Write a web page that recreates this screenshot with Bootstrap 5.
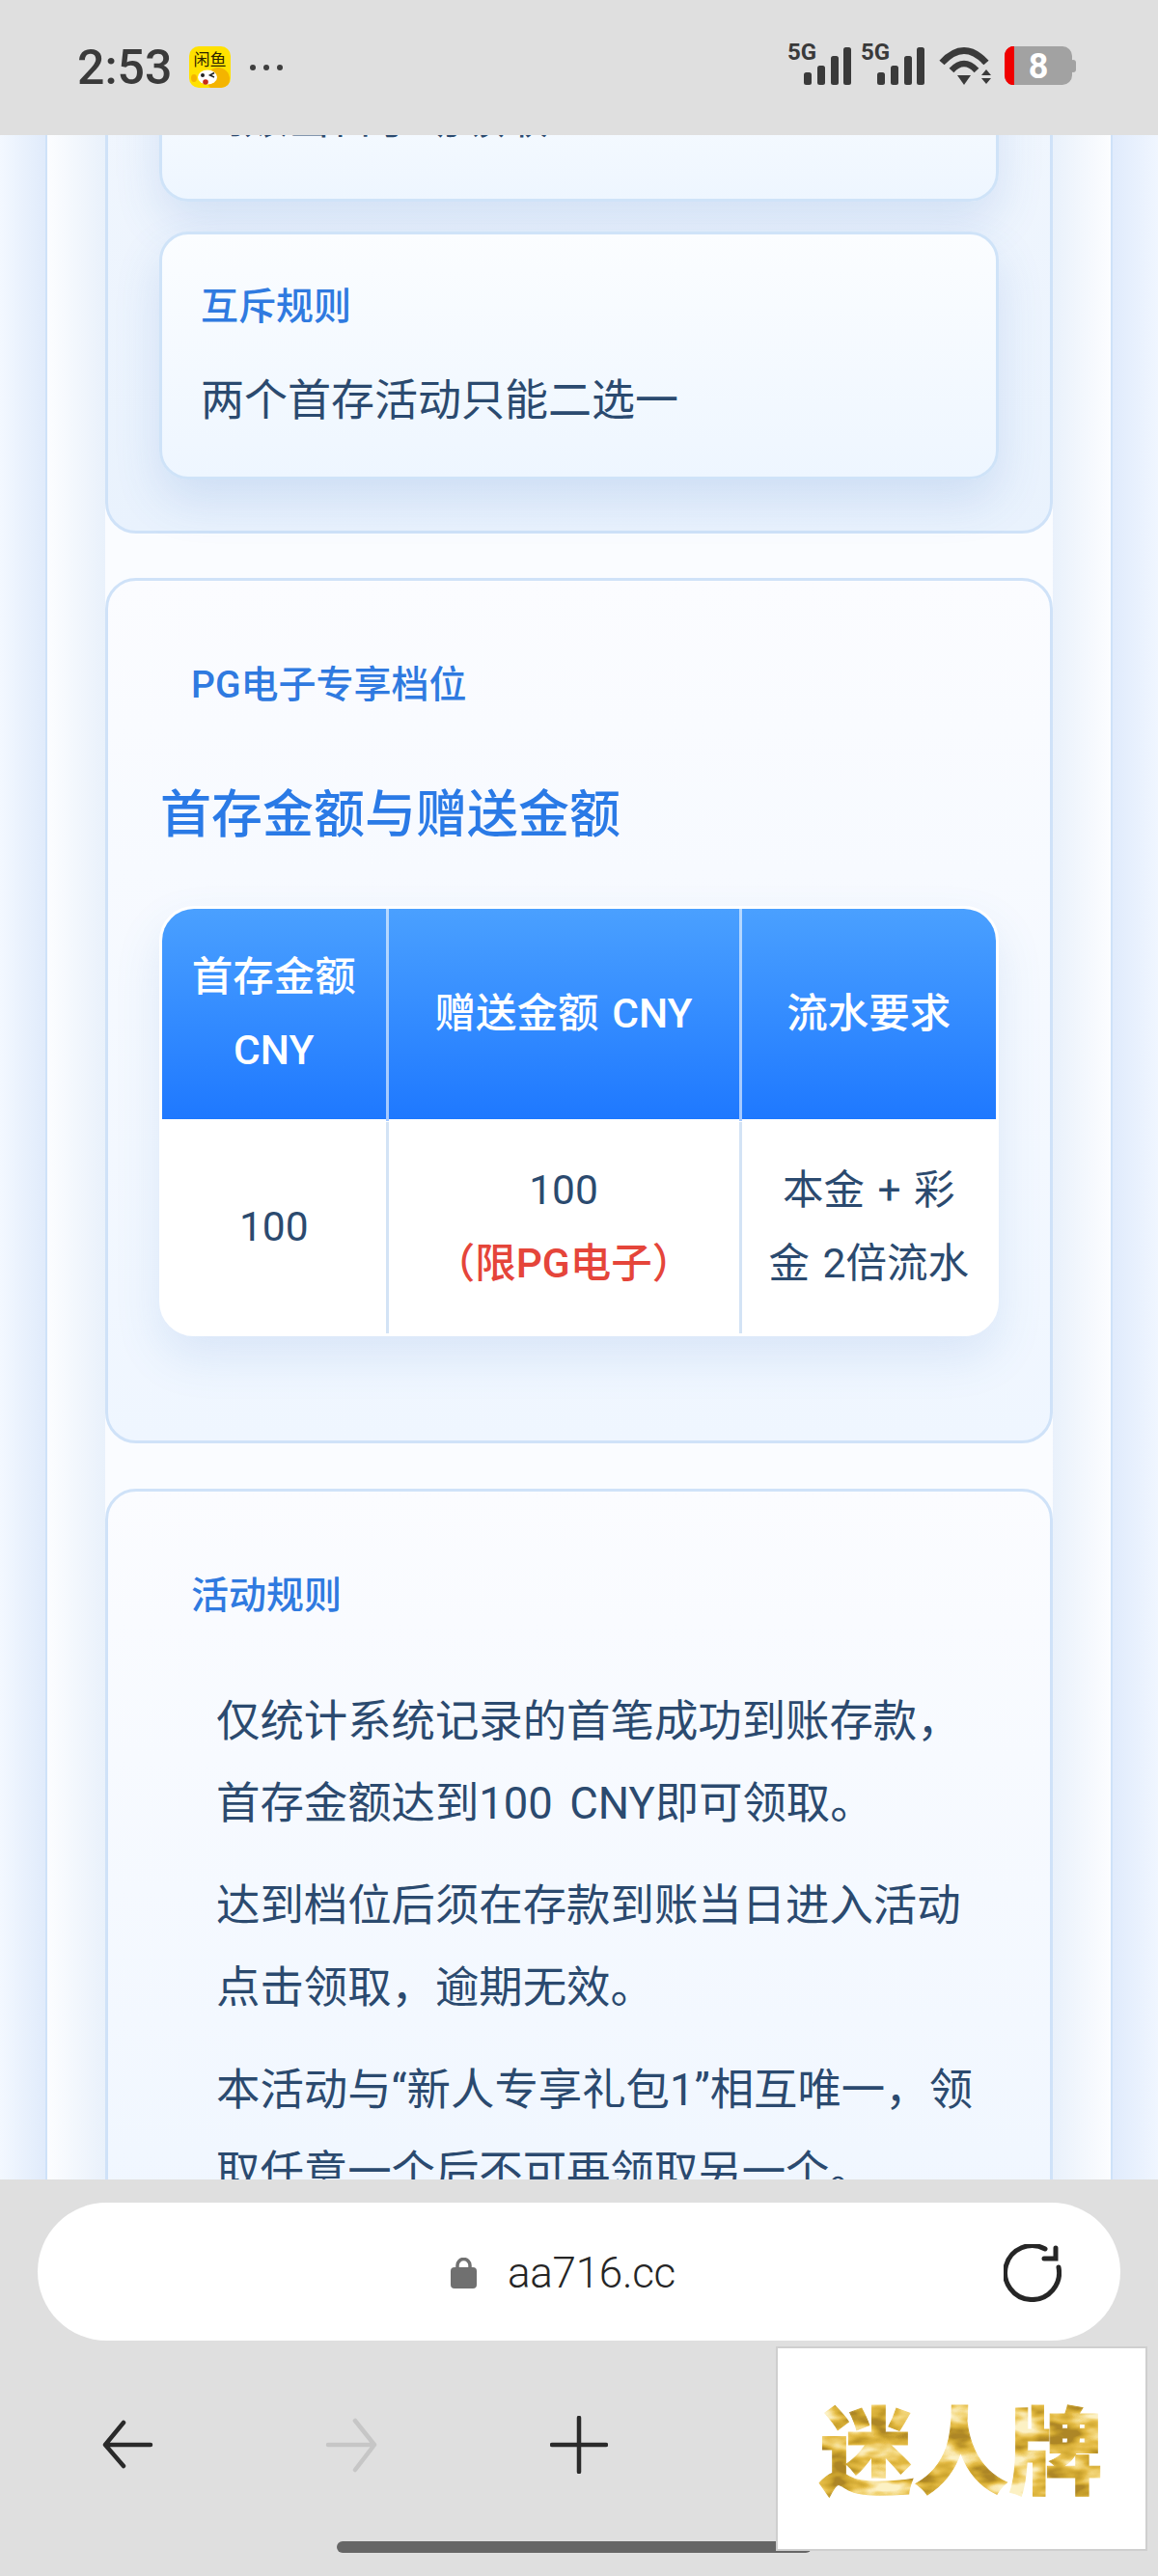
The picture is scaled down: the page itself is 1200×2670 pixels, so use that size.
<!DOCTYPE html>
<html lang="zh-CN">
<head>
  <meta charset="UTF-8">
  <title>首存活动</title>
  <link href="https://cdn.jsdelivr.net/npm/bootstrap@5.3.3/dist/css/bootstrap.min.css" rel="stylesheet">
  <style>
    body {
      width: 1200px;
      height: 2670px;
      overflow: hidden;
      font-family: Roboto, "Noto Sans CJK SC", sans-serif;
      color: #2b4a6f;
      background: #dfdfdf;
    }

    /* phone status bar */
    .status-bar { height: 140px; background: #dfdfdf; padding: 40px 82px 0 80px; color: #3a3a3a; }
    .clock { font-size: 50px; font-weight: 500; line-height: 60px; margin-right: 18px; }
    .app-icon { margin-top: 8px; margin-right: 20px; }
    .more-dots { margin-top: 26px; }

    /* page area, scrolled */
    .page-view {
      height: 2119px;
      overflow: hidden;
      background: linear-gradient(90deg, #f3f8ff 0, #e0ebfb 47px, #e0ebfc calc(100% - 47px), #f0f6ff 100%);
    }
    .page-shell {
      width: 1106px;
      margin: -132px auto 0;
      padding: 0 60px;
      border-left: 2px solid #cfe2f9;
      border-right: 2px solid #cfe2f9;
      background: linear-gradient(90deg, #fcfdff 0, #e9f1fb 60px, #fafcff 60px, #fafcff calc(100% - 60px), #e9f1fb calc(100% - 60px), #fcfdff 100%);
    }
    .promo-panel {
      border: 3px solid #cfe2f8;
      border-radius: 32px;
      background: linear-gradient(180deg, #fbfcff, #eff6ff);
      padding: 75px 55px 53px;
      margin-bottom: 47px;
    }
    .promo-panel.first-panel { padding-top: 25px; padding-bottom: 53px; margin-bottom: 46px; background: linear-gradient(180deg, #f2f7fe, #e9f2fd); }
    .promo-panel.table-panel { padding-bottom: 108px; }

    .rule-card {
      border: 3px solid #cfe3f8;
      border-radius: 30px;
      background: linear-gradient(180deg, #fbfdff, #eef6ff);
      box-shadow: 0 22px 48px rgba(60, 120, 200, .16);
      margin: 0 -2px 31px;
      padding: 42px 40px 40px;
    }
    .rule-card:last-child { margin-bottom: 0; padding-bottom: 36px; }
    .rule-card .rule-head { font-size: 39px; line-height: 66px; margin: 0 0 22px; color: #2f7ae0; font-weight: 500; }
    .rule-card p { font-size: 45px; line-height: 85px; margin: 0; white-space: nowrap; }

    .panel-label { font-size: 39px; line-height: 66px; margin: 0 0 62px 31px; color: #2f7ae0; font-weight: 500; }
    .panel-title { font-size: 53px; line-height: 80px; margin: 0 0 54px -1px; color: #2a7ae6; font-weight: 500; }
    .rules-label { margin-bottom: 55px; }

    .rate-box {
      margin: 0 -2px;
      border: 3px solid #fff;
      border-radius: 36px;
      overflow: hidden;
      background: #fff;
      box-shadow: 0 22px 48px rgba(60, 120, 200, .13);
    }
    .rate-table { table-layout: fixed; margin: 0; --bs-table-bg: transparent; color: #2b4a6f; }
    .rate-table thead { background: linear-gradient(180deg, #4aa0ff, #1e78ff); }
    .rate-table th, .rate-table td {
      font-size: 42.5px;
      line-height: 76px;
      text-align: center;
      vertical-align: middle;
      border-bottom: 0;
      word-spacing: 3px;
    }
    .rate-table th { color: #fff; font-weight: 500; padding: 33px 24px; border-left: 3px solid rgba(255, 255, 255, .6); box-shadow: none; }
    .rate-table td { padding: 33px 24px 34px; border-left: 3px solid #d3e3f5; border-top: 3px solid #fff; color: #2b4a6f; }
    .rate-table th:first-child, .rate-table td:first-child { border-left: 0; }
    .col-amount { width: 233px; }
    .col-bonus { width: 366px; }
    .pg-only { display: block; color: #e5453a; font-weight: 500; }

    .rule-text { font-size: 45.4px; line-height: 85px; margin: 0 0 21px 57px; width: 785px; word-spacing: 6px; }

    /* browser chrome */
    .browser-bar { position: relative; height: 411px; padding-top: 24px; background: #dfdfdf; }
    .url-pill {
      margin: 0 39px;
      height: 143px;
      padding: 2px 61px 0 428px;
      border-radius: 72px;
      background: #fff;
    }
    .url-lock { margin-right: 32px; }
    .url-text { font-size: 44px; font-weight: 300; color: #262626; letter-spacing: -.3px; }
    .tool-row { padding: 78px 0 0 101px; gap: 174.5px; }
    .home-pill { position: absolute; left: 349px; top: 375px; width: 492px; height: 12px; border-radius: 6px; background: #666; }
    .gold-box {
      position: absolute;
      left: 804px;
      top: 173px;
      width: 385px;
      height: 212px;
      border: 2px solid #cfcfcf;
      background: #fff;
    }
    .gold-word {
      font-family: "Noto Sans CJK SC", sans-serif;
      font-size: 98px;
      font-weight: 900;
    }
  </style>
</head>
<body>

<!-- status bar -->
<div class="status-bar d-flex align-items-start">
  <div class="clock">2:53</div>
  <svg class="app-icon" width="43" height="43" viewBox="0 0 43 43">
    <defs><clipPath id="iconClip"><rect width="43" height="43" rx="10"/></clipPath></defs>
    <g clip-path="url(#iconClip)">
      <rect width="43" height="43" fill="#ffe100"/>
      <circle cx="30" cy="34" r="12" fill="#f4b400"/>
      <ellipse cx="5" cy="33" rx="3" ry="4" fill="#f4b400"/>
      <ellipse cx="19" cy="32" rx="10" ry="7.500" fill="#fff"/>
      <circle cx="14" cy="30" r="2" fill="#222"/>
      <path d="M26 27.500 L21.500 30 L26 32" fill="none" stroke="#222" stroke-width="1.500"/>
      <circle cx="17" cy="37" r="2.800" fill="#c62a1a"/>
    </g>
    <text x="21.500" y="20" text-anchor="middle" font-size="17" font-family="Noto Sans CJK SC, sans-serif" fill="#2a2200">闲鱼</text>
  </svg>
  <svg class="more-dots" width="34" height="8" viewBox="0 0 34 8" fill="#3f3f3f">
    <circle cx="3" cy="4" r="3"/><circle cx="17" cy="4" r="3"/><circle cx="31" cy="4" r="3"/>
  </svg>
  <svg class="ms-auto" width="302" height="52" viewBox="0 0 302 52" fill="#3a3a3a">
    <text x="0" y="22" font-size="24" font-weight="700" font-family="Roboto, sans-serif">5G</text>
    <rect x="17" y="35" width="8" height="13" rx="2.500"/>
    <rect x="31" y="28" width="8" height="20" rx="2.500"/>
    <rect x="45" y="18" width="8" height="30" rx="2.500"/>
    <rect x="58" y="9" width="8" height="39" rx="2.500"/>
    <text x="76" y="22" font-size="24" font-weight="700" font-family="Roboto, sans-serif">5G</text>
    <rect x="93" y="35" width="8" height="13" rx="2.500"/>
    <rect x="107" y="28" width="8" height="20" rx="2.500"/>
    <rect x="121" y="18" width="8" height="30" rx="2.500"/>
    <rect x="134" y="9" width="8" height="39" rx="2.500"/>
    <path d="M160 25 Q183 0 206 25" fill="none" stroke="#3a3a3a" stroke-width="7"/>
    <path d="M170 33 Q183 19 196 33" fill="none" stroke="#3a3a3a" stroke-width="6.500"/>
    <path d="M176 38 H190 L183 48 Z"/>
    <path d="M206 32 L211 38 H201 Z M201 41 H211 L206 47 Z"/>
    <rect x="225" y="8" width="70" height="40" rx="10" fill="#a2a2a2"/>
    <path d="M232 8 H235 V48 H232 A10 10 0 0 1 225 38 V18 A10 10 0 0 1 232 8 Z" fill="#f00000"/>
    <rect x="293" y="22" width="6" height="13" rx="3" fill="#a2a2a2"/>
    <text x="260" y="41" text-anchor="middle" font-size="36" font-weight="700" font-family="Roboto, sans-serif" fill="#fff">8</text>
  </svg>
</div>

<!-- page -->
<div class="page-view">
  <div class="page-shell">

    <section class="promo-panel first-panel">
      <div class="rule-card">
        <p>到账当日手动领取</p>
      </div>
      <div class="rule-card">
        <div class="rule-head">互斥规则</div>
        <p>两个首存活动只能二选一</p>
      </div>
    </section>

    <section class="promo-panel table-panel">
      <div class="panel-label">PG电子专享档位</div>
      <h2 class="panel-title">首存金额与赠送金额</h2>
      <div class="rate-box">
        <table class="table rate-table">
          <thead>
            <tr>
              <th class="col-amount">首存金额 CNY</th>
              <th class="col-bonus">赠送金额 CNY</th>
              <th>流水要求</th>
            </tr>
          </thead>
          <tbody>
            <tr>
              <td>100</td>
              <td>100<span class="pg-only">（限PG电子）</span></td>
              <td>本金 + 彩金 2倍流水</td>
            </tr>
          </tbody>
        </table>
      </div>
    </section>

    <section class="promo-panel">
      <div class="panel-label rules-label">活动规则</div>
      <p class="rule-text">仅统计系统记录的首笔成功到账存款，首存金额达到100 CNY即可领取。</p>
      <p class="rule-text">达到档位后须在存款到账当日进入活动点击领取，逾期无效。</p>
      <p class="rule-text">本活动与“新人专享礼包1”相互唯一，领取任意一个后不可再领取另一个。</p>
    </section>

  </div>
</div>

<!-- browser bottom -->
<div class="browser-bar">
  <div class="url-pill d-flex align-items-center">
    <svg class="url-lock" width="27" height="32" viewBox="0 0 27 32">
      <rect y="10" width="27" height="22" rx="4" fill="#707070"/>
      <path d="M7 12 V8 a6.500 6.500 0 0 1 13 0 V12" fill="none" stroke="#707070" stroke-width="3.500"/>
    </svg>
    <span class="url-text">aa716.cc</span>
    <svg class="ms-auto" width="60" height="60" viewBox="0 0 60 60" fill="none" stroke="#262626" stroke-width="5" stroke-linecap="round">
      <path d="M57 24 A28 28 0 1 1 43 5"/>
      <path d="M54 4 V15 H42"/>
    </svg>
  </div>
  <div class="tool-row d-flex">
    <svg width="60" height="60" viewBox="0 0 60 60" fill="none" stroke="#2a2a2a" stroke-width="4.500" stroke-linecap="round" stroke-linejoin="round">
      <path d="M55 30 H8 M27 7 L8 30 L27 52"/>
    </svg>
    <svg width="60" height="60" viewBox="0 0 60 60" fill="none" stroke="#c6c6c6" stroke-width="4.500" stroke-linecap="round" stroke-linejoin="round">
      <path d="M4 30 H51 M32 5 L52 30 L32 56"/>
    </svg>
    <svg width="60" height="60" viewBox="0 0 60 60" fill="none" stroke="#2a2a2a" stroke-width="4.500" stroke-linecap="round">
      <path d="M2 30 H58 M30 2 V58"/>
    </svg>
  </div>
  <div class="home-pill"></div>
  <div class="gold-box">
    <svg width="381" height="208" viewBox="0 0 381 208">
      <defs>
        <filter id="goldGrain" x="0" y="0" width="100%" height="100%">
          <feTurbulence type="fractalNoise" baseFrequency="0.022 0.05" numOctaves="3" seed="7"/>
          <feColorMatrix type="matrix" values="2.6 0 0 0 -.8  2.6 0 0 0 -.8  2.6 0 0 0 -.8  0 0 0 0 1"/>
          <feComponentTransfer>
            <feFuncR type="table" tableValues=".42 .62 .78 .9 .98"/>
            <feFuncG type="table" tableValues=".24 .38 .5 .68 .88"/>
            <feFuncB type="table" tableValues=".02 .03 .06 .2 .55"/>
          </feComponentTransfer>
          <feComposite in2="SourceGraphic" operator="in"/>
        </filter>
      </defs>
      <text class="gold-word" x="190" y="143" text-anchor="middle" fill="#000" stroke="#000" stroke-width="1" filter="url(#goldGrain)">迷人牌</text>
    </svg>
  </div>
</div>

<script src="https://cdn.jsdelivr.net/npm/bootstrap@5.3.3/dist/js/bootstrap.bundle.min.js"></script>
</body>
</html>
